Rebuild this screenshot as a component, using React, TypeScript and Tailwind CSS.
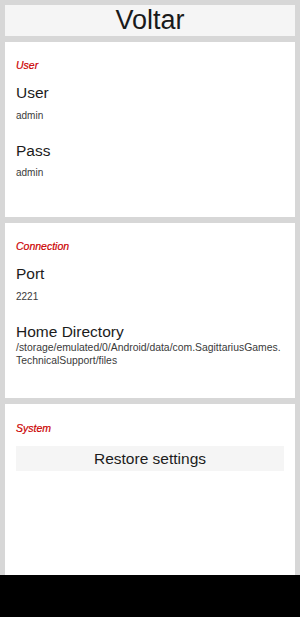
import React from "react";

function Caption({ children }: { children: React.ReactNode }) {
  return <div className="text-[10.5px] leading-[12px] italic text-[#cc0000] [-webkit-text-stroke:0.2px_#cc0000]">{children}</div>;
}

function Label({ children, className = "" }: { children: React.ReactNode; className?: string }) {
  return <div className={`text-[15.5px] leading-[18px] text-[#1c1c1c] ${className}`}>{children}</div>;
}

function Value({ children, className = "" }: { children: React.ReactNode; className?: string }) {
  return <div className={`text-[10px] leading-[12px] text-[#3a3a3a] ${className}`}>{children}</div>;
}

export default function App() {
  return (
    <div className="flex h-[617px] w-[300px] flex-col bg-black font-['Liberation_Sans',Arial,sans-serif]">
      <div className="flex flex-1 flex-col gap-[6px] overflow-hidden bg-[#d7d7d7] px-[5px] pt-[5px]">
        <div className="flex h-[31px] shrink-0 items-center justify-center bg-[#f5f5f5] text-[27px] leading-none text-[#1a1a1a]">
          Voltar
        </div>

        <div className="h-[175px] shrink-0 bg-white px-[11px] pt-[17px]">
          <Caption>User</Caption>
          <Label className="mt-[13px]">User</Label>
          <Value className="mt-[8px]">admin</Value>
          <Label className="mt-[20px]">Pass</Label>
          <Value className="mt-[7px]">admin</Value>
        </div>

        <div className="h-[175px] shrink-0 bg-white px-[11px] pt-[17px]">
          <Caption>Connection</Caption>
          <Label className="mt-[13px]">Port</Label>
          <Value className="mt-[8px]">2221</Value>
          <Label className="mt-[20px]">Home Directory</Label>
          <div className="text-[10.4px] leading-[13px] text-[#3a3a3a]">
            <div>/storage/emulated/0/Android/data/com.SagittariusGames.</div>
            <div>TechnicalSupport/files</div>
          </div>
        </div>

        <div className="h-[175px] shrink-0 bg-white px-[11px] pt-[18px]">
          <Caption>System</Caption>
          <button className="mt-[12px] flex h-[25px] w-full items-center justify-center bg-[#f5f5f5] text-[15.5px] text-[#1c1c1c]">
            Restore settings
          </button>
        </div>
      </div>
      <div className="h-[42px] shrink-0 bg-black" />
    </div>
  );
}
